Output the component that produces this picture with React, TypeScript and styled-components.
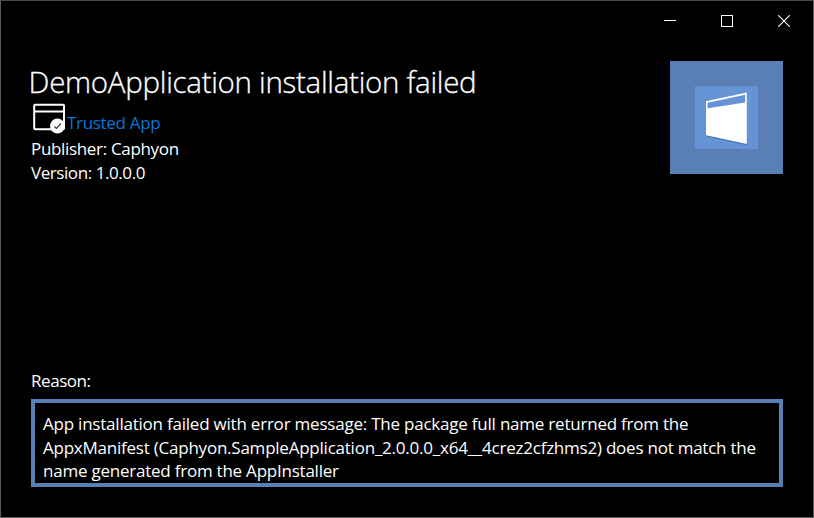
import React from 'react';
import styled, { createGlobalStyle } from 'styled-components';

const reasonLines = [
  { text: 'App installation failed with error message: The package full name returned from the', spacing: -0.22 },
  { text: 'AppxManifest (Caphyon.SampleApplication_2.0.0.0_x64__4crez2cfzhms2) does not match the', spacing: -0.23 },
  { text: 'name generated from the AppInstaller', spacing: -0.23 },
];

const TrustedIcon: React.FC = () => (
  <svg width="34" height="32" viewBox="0 0 34 32" fill="none">
    <rect x="1.2" y="1.8" width="29.8" height="24.5" rx="1" stroke="#fff" strokeWidth="2" />
    <path d="M1 8.5H31" stroke="#fff" strokeWidth="2" />
    <circle cx="24.4" cy="23" r="7.4" fill="#fff" />
    <path d="M21.3 23.4L23.4 25.4L27.9 20.6" stroke="#333" strokeWidth="1.2" />
  </svg>
);

const AppLogo: React.FC = () => (
  <svg width="63" height="63" viewBox="0 0 63 63">
    <path d="M12 50.5L52.5 59.5V56L12 48Z" fill="#4373b8" />
    <path
      fillRule="evenodd"
      fill="#fff"
      d="M11 15.2L51.8 6.4V58L11 49.2ZM12.6 16.8V22.2L50.2 16.4V8.8Z"
    />
  </svg>
);

const App: React.FC = () => {
  return (
    <>
      <GlobalStyle />
      <Window>
        <TitleBar>
          <CaptionButton aria-label="Minimize">
            <svg width="12" height="12" stroke="#fff" fill="none">
              <path d="M0 5.5H12" />
            </svg>
          </CaptionButton>
          <CaptionButton aria-label="Maximize">
            <svg width="12" height="12" stroke="#fff" fill="none">
              <rect x="0.5" y="0.5" width="11" height="11" />
            </svg>
          </CaptionButton>
          <CaptionButton aria-label="Close">
            <svg width="12" height="12" stroke="#fff" fill="none">
              <path d="M0.2 0.2L11.8 11.8M11.8 0.2L0.2 11.8" strokeWidth="1.1" />
            </svg>
          </CaptionButton>
        </TitleBar>
        <Content>
          <Header>
            <Info>
              <Title>DemoApplication installation failed</Title>
              <Trusted>
                <TrustedIcon />
                <TrustedLink $spacing={-0.32}>Trusted App</TrustedLink>
              </Trusted>
              <Line $spacing={-0.33}>Publisher: Caphyon</Line>
              <Line $spacing={-0.43}>Version: 1.0.0.0</Line>
            </Info>
            <LogoTile>
              <LogoInner>
                <AppLogo />
              </LogoInner>
            </LogoTile>
          </Header>
          <Reason>
            <Line $spacing={-0.45}>Reason:</Line>
            <ReasonBox>
              {reasonLines.map(line => (
                <ReasonLine key={line.text} $spacing={line.spacing}>
                  {line.text}
                </ReasonLine>
              ))}
            </ReasonBox>
          </Reason>
        </Content>
      </Window>
    </>
  );
};

export default App;

// Styled components
const GlobalStyle = createGlobalStyle`
  * {
    box-sizing: border-box;
  }
  body {
    margin: 0;
    background: #000;
  }
`;

const Window = styled.div`
  display: flex;
  flex-direction: column;
  width: 814px;
  height: 518px;
  border: 1px solid #5c5c5c;
  border-top-color: #484848;
  background: #000;
  color: #fff;
  font-family: 'Open Sans', 'Noto Sans', sans-serif;
`;

const TitleBar = styled.div`
  display: flex;
  justify-content: flex-end;
  height: 40px;
  padding-right: 1px;
`;

const CaptionButton = styled.button`
  display: flex;
  align-items: center;
  justify-content: center;
  width: 57px;
  height: 40px;
  padding: 0;
  border: none;
  background: transparent;
`;

const Content = styled.div`
  flex: 1;
  display: flex;
  flex-direction: column;
  justify-content: space-between;
  padding: 20px 30px 30px;
`;

const Header = styled.div`
  display: flex;
  justify-content: space-between;
`;

const Info = styled.div`
  display: flex;
  flex-direction: column;
`;

const Title = styled.h1`
  margin: 0 0 0 -2.4px;
  font-size: 29.5px;
  font-weight: 300;
  line-height: 42px;
  letter-spacing: -0.29px;
  -webkit-text-stroke: 0.3px #fff;
  white-space: nowrap;
`;

const Trusted = styled.div`
  display: flex;
  height: 34px;
  padding-left: 2px;
`;

const Line = styled.div<{ $spacing: number }>`
  font-size: 17px;
  line-height: 24px;
  letter-spacing: ${p => p.$spacing}px;
  white-space: pre;
`;

const TrustedLink = styled(Line)`
  padding-top: 8px;
  color: #0078d7;
`;

const ReasonLine = styled(Line)`
  line-height: 23.6px;
`;

const LogoTile = styled.div`
  display: flex;
  align-items: center;
  justify-content: center;
  width: 113px;
  height: 113px;
  background: #5a7fb5;
`;

const LogoInner = styled.div`
  width: 63px;
  height: 63px;
  background: #6593d5;
`;

const Reason = styled.div`
  display: flex;
  flex-direction: column;
  gap: 6px;
`;

const ReasonBox = styled.div`
  height: 88px;
  padding: 9px 8px 0;
  border: 4px solid #5a7fb5;
`;
